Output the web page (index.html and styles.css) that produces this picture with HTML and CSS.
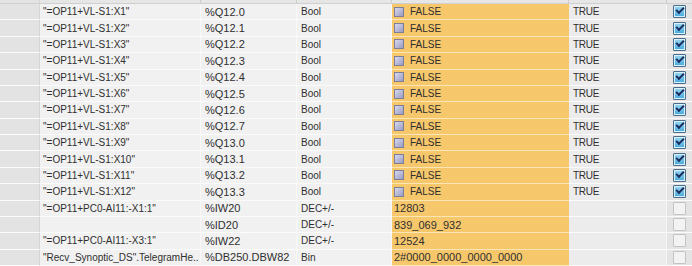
FILE: index.html
```html
<!DOCTYPE html>
<html>
<head>
<meta charset="utf-8">
<link rel="stylesheet" href="styles.css">
</head>
<body>
<div class="table">
  <div class="hdr">
    <div class="hc c0"></div>
    <div class="hc"></div>
    <div class="hc"></div>
    <div class="hc"></div>
    <div class="hc"></div>
    <div class="hc"></div>
    <div class="hc last"></div>
  </div>

  <div class="row"><div class="c c0"></div><div class="c nm">"=OP11+VL-S1:X1"</div><div class="c">%Q12.0</div><div class="c fm">Bool</div><div class="c mon"><span class="bx"></span><span class="txt">FALSE</span></div><div class="c mod">TRUE</div><div class="c chk"><span class="cb on"></span></div></div>
  <div class="row"><div class="c c0"></div><div class="c nm">"=OP11+VL-S1:X2"</div><div class="c">%Q12.1</div><div class="c fm">Bool</div><div class="c mon"><span class="bx"></span><span class="txt">FALSE</span></div><div class="c mod">TRUE</div><div class="c chk"><span class="cb on"></span></div></div>
  <div class="row"><div class="c c0"></div><div class="c nm">"=OP11+VL-S1:X3"</div><div class="c">%Q12.2</div><div class="c fm">Bool</div><div class="c mon"><span class="bx"></span><span class="txt">FALSE</span></div><div class="c mod">TRUE</div><div class="c chk"><span class="cb on"></span></div></div>
  <div class="row"><div class="c c0"></div><div class="c nm">"=OP11+VL-S1:X4"</div><div class="c">%Q12.3</div><div class="c fm">Bool</div><div class="c mon"><span class="bx"></span><span class="txt">FALSE</span></div><div class="c mod">TRUE</div><div class="c chk"><span class="cb on"></span></div></div>
  <div class="row"><div class="c c0"></div><div class="c nm">"=OP11+VL-S1:X5"</div><div class="c">%Q12.4</div><div class="c fm">Bool</div><div class="c mon"><span class="bx"></span><span class="txt">FALSE</span></div><div class="c mod">TRUE</div><div class="c chk"><span class="cb on"></span></div></div>
  <div class="row"><div class="c c0"></div><div class="c nm">"=OP11+VL-S1:X6"</div><div class="c">%Q12.5</div><div class="c fm">Bool</div><div class="c mon"><span class="bx"></span><span class="txt">FALSE</span></div><div class="c mod">TRUE</div><div class="c chk"><span class="cb on"></span></div></div>
  <div class="row"><div class="c c0"></div><div class="c nm">"=OP11+VL-S1:X7"</div><div class="c">%Q12.6</div><div class="c fm">Bool</div><div class="c mon"><span class="bx"></span><span class="txt">FALSE</span></div><div class="c mod">TRUE</div><div class="c chk"><span class="cb on"></span></div></div>
  <div class="row"><div class="c c0"></div><div class="c nm">"=OP11+VL-S1:X8"</div><div class="c">%Q12.7</div><div class="c fm">Bool</div><div class="c mon"><span class="bx"></span><span class="txt">FALSE</span></div><div class="c mod">TRUE</div><div class="c chk"><span class="cb on"></span></div></div>
  <div class="row"><div class="c c0"></div><div class="c nm">"=OP11+VL-S1:X9"</div><div class="c">%Q13.0</div><div class="c fm">Bool</div><div class="c mon"><span class="bx"></span><span class="txt">FALSE</span></div><div class="c mod">TRUE</div><div class="c chk"><span class="cb on"></span></div></div>
  <div class="row"><div class="c c0"></div><div class="c nm">"=OP11+VL-S1:X10"</div><div class="c">%Q13.1</div><div class="c fm">Bool</div><div class="c mon"><span class="bx"></span><span class="txt">FALSE</span></div><div class="c mod">TRUE</div><div class="c chk"><span class="cb on"></span></div></div>
  <div class="row"><div class="c c0"></div><div class="c nm">"=OP11+VL-S1:X11"</div><div class="c">%Q13.2</div><div class="c fm">Bool</div><div class="c mon"><span class="bx"></span><span class="txt">FALSE</span></div><div class="c mod">TRUE</div><div class="c chk"><span class="cb on"></span></div></div>
  <div class="row"><div class="c c0"></div><div class="c nm">"=OP11+VL-S1:X12"</div><div class="c">%Q13.3</div><div class="c fm">Bool</div><div class="c mon"><span class="bx"></span><span class="txt">FALSE</span></div><div class="c mod">TRUE</div><div class="c chk"><span class="cb on"></span></div></div>
  <div class="row"><div class="c c0"></div><div class="c nm">"=OP11+PC0-AI11:-X1:1"</div><div class="c">%IW20</div><div class="c fm">DEC+/-</div><div class="c mon">12803</div><div class="c mod"></div><div class="c chk"><span class="cb"></span></div></div>
  <div class="row"><div class="c c0"></div><div class="c nm"></div><div class="c">%ID20</div><div class="c fm">DEC+/-</div><div class="c mon">839_069_932</div><div class="c mod"></div><div class="c chk"><span class="cb"></span></div></div>
  <div class="row"><div class="c c0"></div><div class="c nm">"=OP11+PC0-AI11:-X3:1"</div><div class="c">%IW22</div><div class="c fm">DEC+/-</div><div class="c mon">12524</div><div class="c mod"></div><div class="c chk"><span class="cb"></span></div></div>
  <div class="row"><div class="c c0"></div><div class="c nm">"Recv_Synoptic_DS".TelegramHe..</div><div class="c">%DB250.DBW82</div><div class="c fm">Bin</div><div class="c mon">2#0000_0000_0000_0000</div><div class="c mod"></div><div class="c chk"><span class="cb"></span></div></div>
</div>
</body>
</html>
```

FILE: styles.css
```css
html, body {
  margin: 0;
  padding: 0;
  background: #efefef;
}
body {
  width: 692px;
  height: 266px;
  overflow: hidden;
  font-family: "Liberation Sans", Arial, sans-serif;
  font-size: 11px;
  color: #2f2f2f;
}
.table {
  display: flex;
  flex-direction: column;
}
.hdr, .row {
  display: grid;
  grid-template-columns: 40px 161px 96px 95px 177px 98px 25px;
}
.hdr {
  height: 4px;
  background: #e6e6e6;
  border-bottom: 1px solid #d0d0d0;
  box-sizing: border-box;
}
.hc {
  border-right: 1px solid #cdcdcd;
}
.hc.last {
  border-right: none;
}
.row {
  height: 16.375px;
}
.c {
  background: #f1f1f1;
  border-bottom: 1px solid #fbfbfb;
  border-right: 1px solid #f8f8f8;
  box-sizing: border-box;
  padding-left: 4px;
  display: flex;
  align-items: center;
  white-space: nowrap;
  overflow: hidden;
}
.nm {
  font-size: 10px;
  padding-left: 3px;
}
.fm {
  font-size: 10px;
}
.c0 {
  background: #e3e3e3;
  border-right: 1px solid #d6d6d6;
}
.mon {
  background: #f7c76b;
  border-bottom: 1px solid #fde6b6;
  border-right: none;
  padding-left: 2px;
}
.txt {
  font-size: 10px;
}
.mod {
  background: #ececec;
  border-right: 1px solid #f6f6f6;
  font-size: 10px;
  letter-spacing: -0.3px;
}
.chk {
  background: #e4e4e4;
  justify-content: center;
  padding-left: 0;
  border-right: none;
}
.bx {
  display: inline-block;
  width: 8px;
  height: 8px;
  border: 1px solid #7d7f96;
  background: linear-gradient(135deg, #d8d9ee, #9a9cc2);
  margin-right: 6px;
  box-sizing: content-box;
}
.cb {
  display: inline-block;
  width: 11px;
  height: 11px;
  border: 1px solid #c4c4c4;
  background: #f3f3f3;
  border-radius: 1px;
  position: relative;
}
.cb.on {
  border: 1px solid #4a6d8e;
  background: linear-gradient(180deg, #9ad9f2, #45a8dc);
  box-shadow: inset 0 0 0 1px #d9f1fb;
}
.cb.on::after {
  content: "";
  position: absolute;
  left: 2px;
  top: 1px;
  width: 6px;
  height: 3px;
  border-left: 2px solid #1d2c5c;
  border-bottom: 2px solid #1d2c5c;
  transform: rotate(-45deg);
}
```
